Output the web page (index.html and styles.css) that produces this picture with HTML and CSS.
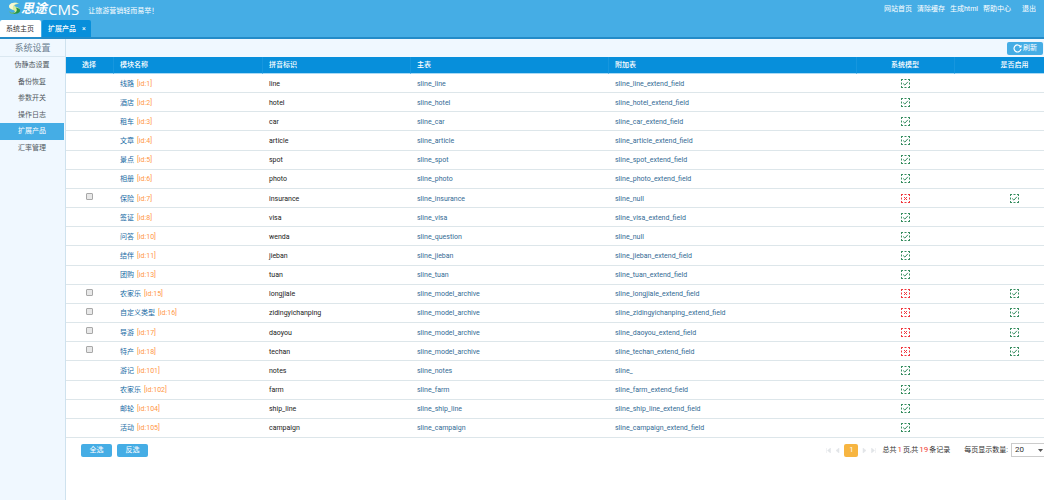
FILE: index.html
```html
<!DOCTYPE html>
<html lang="zh-CN">
<head>
<meta charset="utf-8">
<title>思途CMS</title>
<link rel="stylesheet" href="styles.css">
</head>
<body>
<svg class="defs" aria-hidden="true">
  <symbol id="yes" viewBox="0 0 9 9"><path d="M0 .5h2M3.5 .5h2M7 .5h2M0 8.500h2M3.500 8.500h2M7 8.500h2M.5 0v2M.5 3.500v2M.5 7v2M8.500 0v2M8.500 3.500v2M8.500 7v2M2.200 4.500l1.700 1.600L6.900 2.800" fill="none" stroke="#388e61"/></symbol>
  <symbol id="no" viewBox="0 0 9 9"><path d="M0 .5h2M3.5 .5h2M7 .5h2M0 8.500h2M3.500 8.500h2M7 8.500h2M.5 0v2M.5 3.500v2M.5 7v2M8.500 0v2M8.500 3.500v2M8.500 7v2M3 3l3 3M6 3l-3 3" fill="none" stroke="#f0383f"/></symbol>
</svg>
<header class="top">
  <div class="brand">
    <svg class="mark" viewBox="0 0 12 12"><path d="M10.500 1.500C7 0 1.500 .8 1 4c-.2 2.500 3.500 3 5 4 1 .8 0 2-1.500 2.500C8 11 11.500 9.500 11 7 10.500 5 7 4.800 6 3.800 5.500 2.500 8 1.500 10.500 1.500z" fill="#d9efa0"/><path d="M9 1C5 0 1 1.500 1 4c0 2 2.500 2.600 4 3.300C4 5 4 2.500 9 1z" fill="#f7f8d2"/><path d="M7 5c2 2 1.500 4.500-3 6 5 .5 8-1.500 7-4C10.500 5.600 8.500 5.500 7 5z" fill="#299347"/><path d="M1 8c1 2 3 2.200 5 1.500C5 11.500 1.500 11 1 8z" fill="#7dbd38"/></svg>
    <strong class="name">思途</strong><span class="cms">CMS</span>
    <span class="slogan">让旅游营销轻而易举！</span>
  </div>
  <nav class="links"><a href="#">网站首页</a><a href="#">清除缓存</a><a href="#">生成html</a><a href="#">帮助中心</a><a class="exit" href="#">退出</a></nav>
</header>
<nav class="tabs"><a class="tab" href="#">系统主页</a><a class="tab current" href="#">扩展产品<span class="close">×</span></a></nav>
<div class="body">
  <aside class="side">
    <h2>系统设置</h2>
    <ul>
      <li><a href="#">伪静态设置</a></li><li><a href="#">备份恢复</a></li><li><a href="#">参数开关</a></li><li><a href="#">操作日志</a></li><li><a class="active" href="#">扩展产品</a></li><li><a href="#">汇率管理</a></li>
    </ul>
  </aside>
  <main>
    <div class="toolbar"><button class="btn refresh" type="button"><svg viewBox="0 0 9 9"><path d="M7.500 2.600A3.500 3.500 0 1 0 8 5" fill="none" stroke="#fff" stroke-width="1.200"/><path d="M8.500 .8v2.700H5.800z" fill="#fff"/></svg>刷新</button></div>
    <table>
      <colgroup><col class="c-pick"><col class="c-name"><col class="c-key"><col class="c-main"><col><col class="c-sys"><col class="c-on"></colgroup>
      <thead><tr><th class="mid">选择</th><th>模块名称</th><th>拼音标识</th><th>主表</th><th>附加表</th><th class="mid">系统模型</th><th class="last">是否启用</th></tr></thead>
      <tbody id="rows"></tbody>
    </table>
    <footer class="foot">
      <button class="btn" type="button">全选</button><button class="btn" type="button">反选</button>
      <div class="pager">
        <a href="#" aria-label="首页"><svg viewBox="0 0 5 5"><path d="M.5 0v5M4.500 0v5L1.500 2.500z"/></svg></a>
        <a href="#" aria-label="上一页"><svg viewBox="0 0 5 5"><path d="M4 0v5L1 2.500z"/></svg></a>
        <a class="page" href="#">1</a>
        <a href="#" aria-label="下一页"><svg viewBox="0 0 5 5"><path d="M1 0v5l3-2.500z"/></svg></a>
        <a href="#" aria-label="末页"><svg viewBox="0 0 5 5"><path d="M4.500 0v5M.5 0v5l3-2.500z"/></svg></a>
      </div>
      <span class="total">总共<b>1</b>页,共<b>19</b>条记录</span>
      <label for="size">每页显示数量:</label>
      <span class="pick"><select id="size"><option>20</option></select><svg viewBox="0 0 5 3"><path d="M0 0h5L2.500 3z" fill="#555"/></svg></span>
    </footer>
  </main>
</div>
<script src="rows.js"></script>
</body>
</html>
```
FILE: styles.css
```css
* { box-sizing: border-box; }
body { margin: 0; min-height: 100vh; display: flex; flex-direction: column; overflow-x: hidden; background: #fff; color: #333; font: 7px/10px Roboto, "Noto Sans CJK SC", sans-serif; }
a { color: inherit; text-decoration: none; }
button, select { font: inherit; }
.defs { position: absolute; width: 0; height: 0; }
.top { height: 20px; padding: 0 8px 2px; display: flex; align-items: center; justify-content: space-between; background: #45ade5; color: #fff; }
.brand { display: flex; align-items: center; white-space: nowrap; }
.mark { width: 13px; height: 13px; margin-top: -2px; }
.name { font-size: 13px; line-height: 16px; font-style: italic; }
.cms { font-family: "Open Sans", sans-serif; font-size: 15px; line-height: 16px; margin-left: 1px; }
.slogan { margin: 4px 0 0 9px; }
.links { display: flex; gap: 5px; white-space: nowrap; }
.links .exit { margin-left: 6px; }
.tabs { height: 19px; display: flex; gap: 1px; background: #45ade5; border-bottom: 2px solid #238bc8; white-space: nowrap; }
.tab { height: 17px; padding: 0 7px 0 6px; line-height: 18px; background: #fff; border-radius: 2px 2px 0 0; }
.current { background: #078fdb; color: #fff; padding-right: 5px; font-weight: 500; }
.close { margin-left: 6px; font-weight: 400; }
.body { flex: 1; display: flex; }
.side { flex: none; width: 66px; background: #f0f8ff; border-right: 1px solid #cfe2ee; color: #505860; text-align: center; }
.side h2 { margin: 0; height: 18px; line-height: 18px; font-size: 9px; font-weight: 400; color: #6b7f90; border-bottom: 1px solid #dbe8f1; }
.side ul { list-style: none; margin: 0; padding: 0 1px 0 0; height: 99px; display: grid; grid-auto-rows: 1fr; }
.side li { display: grid; }
.side a { line-height: 16px; }
.side .active { background: #45ade5; color: #fff; }
main { flex: 1; min-width: 0; }
.toolbar { height: 18px; display: flex; align-items: center; justify-content: flex-end; padding-right: 1px; background: #f0f8ff; }
.btn { width: 31px; height: 13px; padding: 0; border: 0; border-radius: 2px; background: #45ade5; color: #fff; line-height: 13px; }
.refresh { width: 36px; display: flex; align-items: center; justify-content: center; gap: 1px; }
.refresh svg { width: 9px; height: 9px; }
table { width: 100%; height: 381px; table-layout: fixed; border-collapse: separate; border-spacing: 0; }
.c-pick { width: 48px; }
.c-name { width: 149px; }
.c-key { width: 148px; }
.c-main { width: 198px; }
.c-sys { width: 98px; }
.c-on { width: 89px; }
th { height: 17px; padding: 0 0 0 6px; background: #078fdb; border-right: 1px solid #1696de; border-bottom: 1px solid #a9daf5; color: #fff; font-weight: 500; text-align: left; }
td { height: 19px; padding: 1px 0 0 6px; border-bottom: 1px solid #dde6ea; white-space: nowrap; }
.mid { padding: 0 1px 0 0; text-align: center; }
.last { padding: 0 0 0 30px; border-right: 0; text-align: center; }
td svg { width: 9px; height: 9px; display: block; margin: 0 auto; }
td input { appearance: none; display: block; width: 7px; height: 7px; margin: 0 auto 3px; border: 1px solid #a8a8a8; border-radius: 1px; background: #e8e8e8; }
.title { color: #176ba4; }
.id { color: #ff9644; margin-left: 3px; }
.ref { color: #336b94; }
.key { color: #222; }
.foot { display: flex; align-items: center; gap: 5px; padding: 5px 0 0 15px; white-space: nowrap; overflow: hidden; }
.pager { margin-left: auto; display: flex; align-items: center; gap: 4px; }
.pager svg { display: block; width: 5px; height: 5px; fill: #e2e5e8; stroke: #e2e5e8; stroke-width: 0.5; }
.page { width: 14px; height: 13px; line-height: 13px; text-align: center; background: #f7b541; color: #fff; border-radius: 2px; }
.total { margin: 0 9px 0 1px; }
.total b { color: #f03a32; font-weight: 400; margin: 0 1px; font-size: 8px; }
.pick { position: relative; width: 33px; height: 14px; margin-left: -2px; }
.pick select { appearance: none; display: block; width: 100%; height: 14px; padding: 0 3px; border: 1px solid #ccc; border-right: 0; border-radius: 0; background: #fff; color: #333; font-size: 8px; }
.pick svg { position: absolute; right: 1px; top: 6px; width: 5px; height: 3px; }
```
FILE: rows.js
```js
const modules = [
  ["线路", 1, "line", "sline_line", "sline_line_extend_field"],
  ["酒店", 2, "hotel", "sline_hotel", "sline_hotel_extend_field"],
  ["租车", 3, "car", "sline_car", "sline_car_extend_field"],
  ["文章", 4, "article", "sline_article", "sline_article_extend_field"],
  ["景点", 5, "spot", "sline_spot", "sline_spot_extend_field"],
  ["相册", 6, "photo", "sline_photo", "sline_photo_extend_field"],
  ["保险", 7, "insurance", "sline_insurance", "sline_null", true],
  ["签证", 8, "visa", "sline_visa", "sline_visa_extend_field"],
  ["问答", 10, "wenda", "sline_question", "sline_null"],
  ["结伴", 11, "jieban", "sline_jieban", "sline_jieban_extend_field"],
  ["团购", 13, "tuan", "sline_tuan", "sline_tuan_extend_field"],
  ["农家乐", 15, "longjiale", "sline_model_archive", "sline_longjiale_extend_field", true],
  ["自定义类型", 16, "zidingyichanping", "sline_model_archive", "sline_zidingyichanping_extend_field", true],
  ["导游", 17, "daoyou", "sline_model_archive", "sline_daoyou_extend_field", true],
  ["特产", 18, "techan", "sline_model_archive", "sline_techan_extend_field", true],
  ["游记", 101, "notes", "sline_notes", "sline_"],
  ["农家乐", 102, "farm", "sline_farm", "sline_farm_extend_field"],
  ["邮轮", 104, "ship_line", "sline_ship_line", "sline_ship_line_extend_field"],
  ["活动", 105, "campaign", "sline_campaign", "sline_campaign_extend_field"]
];
const icon = name => `<svg role="img"><use href="#${name}"/></svg>`;
document.getElementById("rows").innerHTML = modules.map(([title, id, key, main, extra, custom]) => `<tr>
  <td class="mid">${custom ? `<input type="checkbox" aria-label="${title}">` : ""}</td>
  <td><a class="title" href="#">${title}</a><span class="id">[id:${id}]</span></td>
  <td class="key">${key}</td><td class="ref">${main}</td><td class="ref">${extra}</td>
  <td class="mid">${icon(custom ? "no" : "yes")}</td>
  <td class="last">${custom ? icon("yes") : ""}</td></tr>`).join("");
```
